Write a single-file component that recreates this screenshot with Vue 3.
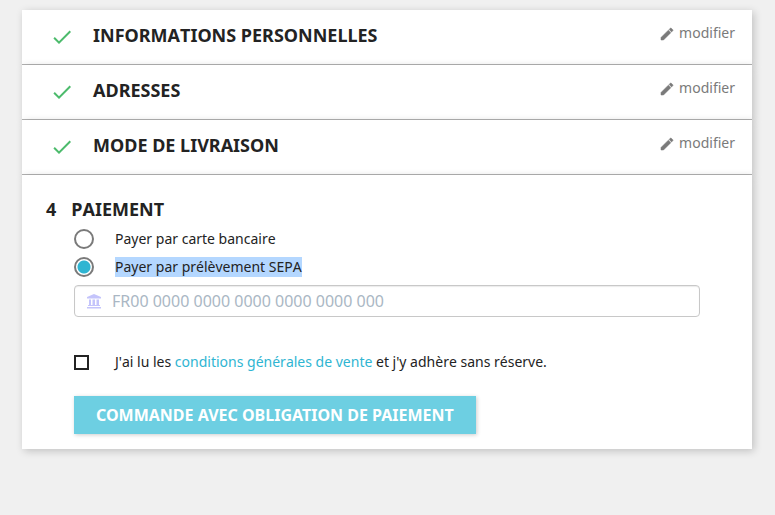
<script setup>
import { ref } from 'vue'

const steps = ['Informations personnelles', 'Adresses', 'Mode de livraison']
const payment = ref('sepa')
const iban = ref('')
const accepted = ref(false)
</script>

<template>
  <main class="checkout">
    <section v-for="step in steps" :key="step" class="step done">
      <svg class="check" viewBox="0 0 24 24" aria-hidden="true">
        <path d="M9 16.17 4.83 12l-1.42 1.41L9 19 21 7l-1.41-1.41z" />
      </svg>
      <h2 class="title">{{ step }}</h2>
      <button type="button" class="edit">
        <svg class="pencil" viewBox="0 0 24 24" aria-hidden="true">
          <path d="M3 17.25V21h3.75L17.81 9.94l-3.75-3.75L3 17.25zM20.71 7.04c.39-.39.39-1.02 0-1.41l-2.34-2.34c-.39-.39-1.02-.39-1.41 0l-1.83 1.83 3.75 3.75 1.83-1.83z" />
        </svg>
        modifier
      </button>
    </section>

    <section class="step current">
      <h2 class="title numbered"><span>4</span>Paiement</h2>
      <form class="form" @submit.prevent>
        <div class="options">
          <label class="option">
            <input v-model="payment" class="radio" type="radio" name="payment" value="card" />
            <span>Payer par carte bancaire</span>
          </label>
          <label class="option">
            <input v-model="payment" class="radio" type="radio" name="payment" value="sepa" />
            <span class="highlight">Payer par prélèvement SEPA</span>
          </label>
        </div>
        <div class="iban">
          <svg class="bank" viewBox="0 0 16 16" aria-hidden="true">
            <path d="M8 1 15 4v1.500H1V4zM3 6.500h2V12h1.500V6.500h2.500V12h1.500V6.500H13V12h1v1H2v-1h1zM1 14h14v1.500H1z" />
          </svg>
          <input v-model="iban" class="iban-input" type="text" aria-label="IBAN" placeholder="FR00 0000 0000 0000 0000 0000 000" />
        </div>
        <div class="terms">
          <input id="terms" v-model="accepted" class="box" type="checkbox" />
          <label for="terms">J'ai lu les <a href="#conditions">conditions générales de vente</a> et j'y adhère sans réserve.</label>
        </div>
        <button type="submit" class="submit">Commande avec obligation de paiement</button>
      </form>
    </section>
  </main>
</template>

<style>
body {
  background: #f0f0f0;
}
</style>

<style scoped>
.checkout {
  padding: 10px 23px 24px 22px;
  font-family: "Noto Sans", sans-serif;
  font-size: 14px;
  font-kerning: none;
  line-height: 20px;
  color: #232323;
}

.step {
  background: #fff;
  box-shadow: 2px 2px 8px rgba(0, 0, 0, 0.2);
}

.done {
  display: flex;
  align-items: flex-start;
  padding: 13px 17px 15px 28px;
  border-bottom: 1px solid #b2b2b2;
}

.check {
  width: 24px;
  height: 24px;
  margin-top: 2px;
  fill: #4cbb6c;
}

.title {
  margin: 0 0 0 19px;
  font-size: 18px;
  font-weight: 700;
  line-height: 24px;
  text-transform: uppercase;
}

.edit {
  display: flex;
  align-items: flex-end;
  gap: 4px;
  margin-left: auto;
  padding: 0;
  border: 0;
  background: none;
  color: #7a7a7a;
  font: inherit;
  cursor: pointer;
}

.pencil {
  width: 16px;
  height: 16px;
  padding-bottom: 1px;
  fill: currentColor;
  stroke: currentColor;
  stroke-width: 0.8;
}

.current {
  padding: 22px 24px 15px;
}

.numbered {
  display: flex;
  gap: 15px;
  margin-left: 0;
}

.form {
  padding: 6px 28px 0;
}

.options {
  display: grid;
  gap: 4px;
}

.option {
  display: flex;
  align-items: center;
  gap: 21px;
  height: 24px;
}

.radio,
.box {
  appearance: none;
  flex: none;
  box-sizing: border-box;
  margin: 0;
  background: #fff;
}

.radio {
  width: 20px;
  height: 20px;
  border: 2px solid #7a7a7a;
  border-radius: 50%;
}

.radio:checked {
  background: radial-gradient(circle, #2fb5d2 6px, #fff 7px);
}

.highlight {
  background: #b4d7ff;
}

.iban {
  display: flex;
  align-items: center;
  gap: 10px;
  margin-top: 6px;
  padding: 0 11px;
  border: 1px solid #c8c8c8;
  border-radius: 4px;
  box-shadow: inset 0 1px 1px rgba(0, 0, 0, 0.08);
}

.bank {
  width: 16px;
  height: 16px;
  fill: #c4c4fb;
}

.iban-input {
  flex: 1;
  min-width: 0;
  height: 30px;
  padding: 0;
  border: 0;
  outline: 0;
  background: none;
  color: #232323;
  font: 400 16px "Noto Sans", sans-serif;
}

.iban-input::placeholder {
  color: #aab7c4;
  opacity: 1;
}

.terms {
  display: flex;
  align-items: center;
  gap: 26px;
  margin-top: 35px;
}

.box {
  width: 15px;
  height: 15px;
  border: 2px solid #232323;
}

.box:checked {
  background: #232323;
}

.terms a {
  color: #2fb5d2;
  text-decoration: none;
}

.submit {
  display: block;
  margin-top: 24px;
  padding: 8px 22px;
  border: 0;
  background: #6dcfe2;
  box-shadow: 1px 1px 4px rgba(0, 0, 0, 0.2);
  color: #fff;
  font: 700 16px/22px "Noto Sans", sans-serif;
  text-transform: uppercase;
  cursor: pointer;
}
</style>
